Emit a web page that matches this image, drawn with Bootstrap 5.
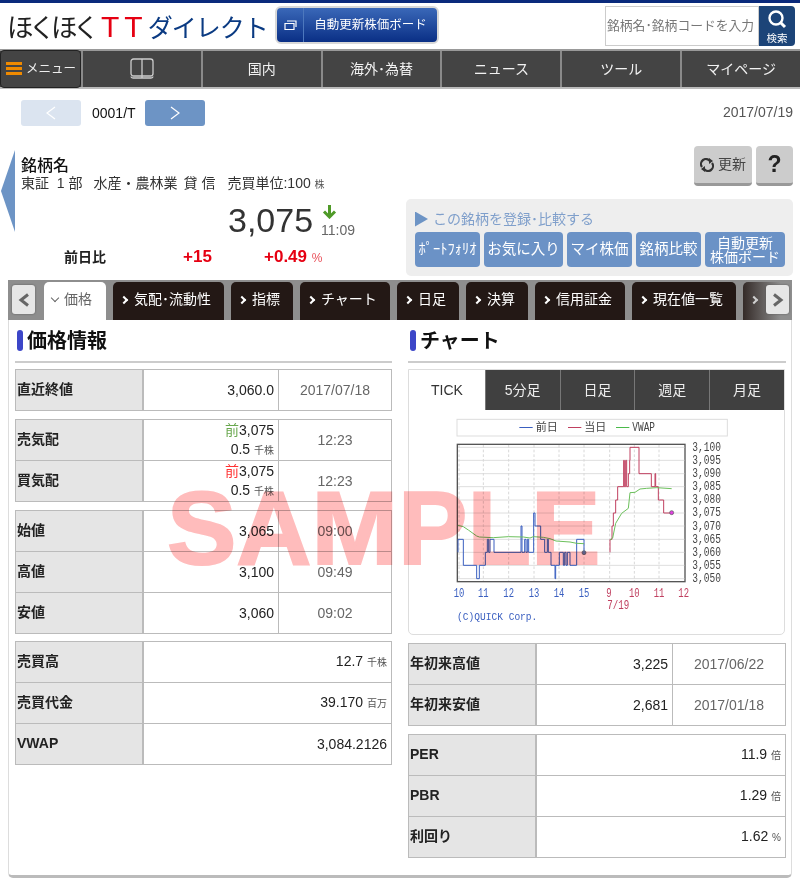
<!DOCTYPE html>
<html lang="ja">
<head>
<meta charset="utf-8">
<title>銘柄名</title>
<link href="https://cdn.jsdelivr.net/npm/bootstrap@5.3.0/dist/css/bootstrap.min.css" rel="stylesheet">
<style>
body{font-family:"Liberation Sans","Noto Sans CJK JP",sans-serif;font-size:14px;color:#222;background:#fff;width:800px;height:883px;overflow:hidden;position:relative;line-height:1.2}
.hk-head{border-top:3px solid #0a2a7c;height:49px;padding-top:3px}
.hk-logo{font-family:"Noto Sans CJK JP",sans-serif;line-height:40px;margin-left:7px;width:266px;white-space:nowrap}
.hk-logo .l1{color:#222;letter-spacing:-4.500px;font-size:26.500px}
.hk-logo .l2{color:#e60012;font-family:"Liberation Sans",sans-serif;font-size:30px;margin:0 0 0 6px;letter-spacing:5px}
.hk-logo .l3{color:#0a3a82;font-size:25px;letter-spacing:-1px}
.hk-auto{width:164px;height:38px;margin-left:2px;border:2px solid #d8d8d8;border-radius:6px;background:linear-gradient(#3a68b8,#0a2f85);color:#fff;font-size:12.500px;overflow:hidden}
.hk-auto .ic{width:27px;border-right:1px solid #4d78bd;height:100%}
.hk-search{margin-left:166px;height:40px;width:190px}
.hk-search .in{width:154px;border:1px solid #ccc;font-size:12.800px;color:#777;line-height:38px;padding-left:1px;white-space:nowrap;overflow:hidden}
.hk-search .bt{width:36px;background:#1c4478;color:#fff;font-size:10.500px;border-radius:0 4px 4px 0;line-height:1;text-align:center;padding-top:3px}
.hk-nav{height:40px;background:#444;border-top:2px solid #999;border-bottom:2px solid #bbb;color:#f2f2f2;font-size:14px}
.hk-nav .it{flex:1 1 0;border-left:2px solid #8a8a8a;height:100%}
.hk-menu{width:81px;height:38px;flex:none;background:#444;border:1px solid #222;border-radius:4px;font-size:12.500px;color:#eee;gap:4px;padding-left:5px}
.hk-bars{width:16px;height:14px;background:repeating-linear-gradient(#f08a00 0 3px,transparent 3px 5px)}
.hk-pager{height:50px;padding:11px 7px 0 21px}
.hk-pg{width:60px;height:26px;border-radius:3px;background:#6d94c5}
.hk-pg.off{background:#dbe4f0}
.hk-code{width:64px;padding-left:11px;font-size:14px;color:#111;line-height:27px}
.hk-date{color:#555;font-size:14px;line-height:24px}
.hk-info{height:141px}
.hk-left{width:400px;padding-top:11px}
.hk-tri{width:14px;height:82px;background:#6d94c5;clip-path:polygon(100% 0,100% 100%,0 50%);margin-left:1px}
.hk-name{font-size:16px;font-weight:500;margin-left:6px;line-height:19px;margin-top:6px;color:#111}
.hk-sub{font-size:14px;color:#333;margin-left:6px;line-height:17px;white-space:nowrap}
.hk-sub .u,.hk-u{font-size:10px;color:#555}
.hk-s1{margin-right:11px}.hk-s2{margin-right:6px}.hk-s3{margin-right:4px}.hk-s4{margin-right:12px}
.hk-price{font-size:34px;line-height:38px;color:#333;position:absolute;left:228px;top:201px}
.hk-time{color:#666;font-size:14px;line-height:16px}
.hk-chg{font-weight:700;height:24px;line-height:24px}
.hk-chg span{display:block}
.hk-c1{width:64px}
.hk-c2{width:119px;font-size:14px}
.hk-c3{width:81px;color:#e60012;font-size:17px}
.hk-c4{color:#e60012;font-size:17px}
.hk-c4 small{font-size:12px;font-weight:400;color:#e9505a}
.hk-right{width:400px;padding:7px 7px 0 6px}
.hk-gbtn{background:#ccc;border-radius:4px;border-bottom:3px solid #999;height:40px;color:#444;font-size:14px}
.hk-bu{width:58px}.hk-bq{width:37px;font-size:23px;font-weight:700;color:#222}
.hk-reg{background:#eee;border-radius:5px;height:77px;margin-top:13px;padding:12px 8px 0 9px}
.hk-regt{color:#7f9fcb;font-size:14px;line-height:16px;gap:5px}
.hk-regtri{width:13px;height:15px;background:#6d94c5;clip-path:polygon(0 0,100% 50%,0 100%)}
.hk-regb{margin-top:5px;gap:4px}
.hk-regb div{background:#6b92c6;color:#fff;height:35px;border-radius:4px;font-size:14.500px;display:flex;align-items:center;justify-content:center;text-align:center;white-space:nowrap}
.w1{width:65px}.w2{width:79px}.w3{width:65px}.w4{width:65px}.w5{width:80px;font-size:14px !important;line-height:14px}
.hk-tabs{margin-left:8px;width:784px;height:40px;background:#8e8e8e;position:relative;overflow:hidden;padding:2px 0 0 36px;gap:7px;color:#fff}
.hk-tab{height:38px;background:#231815;border-radius:5px 5px 0 0;font-size:14px;line-height:35px;padding-left:8px;white-space:nowrap;flex:none;overflow:hidden}
.hk-tab.on{background:#fff;color:#666}
.hk-tab i{display:inline-block;width:6px;height:6px;border-top:2px solid #fff;border-right:2px solid #fff;transform:rotate(45deg);margin-right:7px;position:relative;top:-1px}
.hk-tab.on i{border-color:#666;border-width:1.500px;transform:rotate(135deg);margin-right:6px;top:-3px}
.hk-arrow{position:absolute;top:5px;width:23px;height:29px;background:#e6e6e6;border-radius:3px;box-shadow:0 0 2px #555;display:flex;align-items:center;justify-content:center}
.hk-fade{position:absolute;right:0;top:0;width:56px;height:40px;background:linear-gradient(90deg,rgba(142,142,142,0),#8e8e8e 80%)}
.hk-panel{margin-left:8px;width:784px;height:558px;background:#fff;border-left:1px solid #ddd;border-right:1px solid #ddd;border-bottom:3px solid #bbb;border-radius:0 0 5px 5px;padding:0 5px 0 6px}
.hk-colL{width:377px}.hk-colR{width:378px}
.hk-h{height:43px;border-bottom:2px solid #ccc;padding-top:10px;margin-bottom:6px;font-size:20px;line-height:20px;font-weight:700;color:#111;font-family:"Noto Sans CJK JP",sans-serif;gap:4px;padding-left:2px}
.hk-hbar{width:6px;height:21px;background:#3c46c8;border-radius:3px}
.hk-t{table-layout:fixed;width:100%;margin-bottom:8px;border-collapse:collapse}
.hk-t.hk-t4{margin-top:-1px}
.hk-t td{height:41px;border:1px solid #bbb;padding:0 4px;font-size:14px;vertical-align:middle;background:#fff;color:#222}
.hk-t td.lb{width:127px;background:#e5e5e5;font-weight:700;padding:0 0 2px 1px;font-size:14px;color:#222;border-right-width:2px}
.hk-t td.v{text-align:right;line-height:19px}
.hk-t td.tm{width:113px;text-align:center;color:#666}
.hk-t .gr{color:#6aa84f}.hk-t .rd{color:#f33}
.hk-chart{height:266px;border:1px solid #ddd;border-radius:0 0 5px 5px;margin-bottom:8px;margin-right:1px}
.hk-ct{height:40px;background:#404040;color:#eee;font-size:14px}
.hk-ct div{width:75px;height:100%;border-left:1px solid #777;display:flex;align-items:center;justify-content:center}
.hk-ct div.on{width:76px;background:#fff;color:#333;border:0}
.hk-svg{display:block;margin:0 0 0 31px}
.hk-wm{position:absolute;left:167px;top:473px;font-family:"Liberation Sans",sans-serif;font-weight:700;font-size:104px;line-height:110px;color:#ffbcbc;-webkit-text-stroke:2px #ffbcbc;mix-blend-mode:multiply;pointer-events:none;white-space:nowrap}
</style>
</head>
<body>
<header class="hk-head d-flex align-items-start">
  <div class="hk-logo"><span class="l1">ほくほく</span><span class="l2">TT</span><span class="l3">ダイレクト</span></div>
  <div class="hk-auto d-flex align-items-center">
    <div class="ic d-flex align-items-center justify-content-center"><svg width="13" height="11" viewBox="0 0 13 11"><path d="M3 1h9v6M1 3.500h9v6H1z" fill="none" stroke="#fff" stroke-width="1.200"/></svg></div>
    <div class="flex-grow-1 text-center">自動更新株価ボード</div>
  </div>
  <div class="hk-search d-flex">
    <div class="in">銘柄名･銘柄コードを入力</div>
    <div class="bt"><svg width="20" height="20" viewBox="0 0 20 20" class="d-block mx-auto"><circle cx="9" cy="9" r="6.500" fill="none" stroke="#fff" stroke-width="2.400"/><path d="M13.500 13.500L18 18" stroke="#fff" stroke-width="3"/></svg><div class="mt-1">検索</div></div>
  </div>
</header>
<nav class="hk-nav d-flex align-items-center">
  <div class="hk-menu d-flex align-items-center"><span class="hk-bars"></span><span>メニュー</span></div>
  <div class="it d-flex align-items-center justify-content-center"><svg width="24" height="22" viewBox="0 0 24 22"><rect x="1" y="1" width="22" height="17" rx="2.500" fill="none" stroke="#ccc" stroke-width="1.300"/><path d="M12 1V20M1 18.500Q1 20 3 20H21Q23 20 23 18.500" fill="none" stroke="#ccc" stroke-width="1.300"/></svg></div>
  <div class="it d-flex align-items-center justify-content-center">国内</div>
  <div class="it d-flex align-items-center justify-content-center">海外･為替</div>
  <div class="it d-flex align-items-center justify-content-center">ニュース</div>
  <div class="it d-flex align-items-center justify-content-center">ツール</div>
  <div class="it d-flex align-items-center justify-content-center">マイページ</div>
</nav>
<section class="hk-pager d-flex align-items-start">
  <div class="hk-pg off d-flex align-items-center justify-content-center"><svg width="12" height="14" viewBox="0 0 12 14"><path d="M10 1L2 7l8 6" fill="none" stroke="#fff" stroke-width="1.200"/></svg></div>
  <div class="hk-code">0001/T</div>
  <div class="hk-pg d-flex align-items-center justify-content-center"><svg width="12" height="14" viewBox="0 0 12 14"><path d="M2 1l8 6-8 6" fill="none" stroke="#fff" stroke-width="1.200"/></svg></div>
  <div class="hk-date ms-auto">2017/07/19</div>
</section>
<section class="hk-info d-flex">
  <div class="hk-left d-flex flex-wrap align-content-start">
    <div class="hk-tri"></div>
    <div>
      <div class="hk-name">銘柄名</div>
      <div class="hk-sub"><span class="hk-s1">東証&nbsp;&nbsp;1&nbsp;部</span><span class="hk-s2">水産・農林業</span><span class="hk-s3">貸</span><span class="hk-s4">信</span>売買単位:100 <span class="u">株</span></div>
    </div>
  </div>
  <div class="hk-right">
    <div class="d-flex justify-content-end hk-gap">
      <div class="hk-gbtn hk-bu d-flex align-items-center justify-content-center gap-1 me-1"><svg width="14" height="14" viewBox="0 0 14 14"><path d="M2 9A5 5 0 0 1 10 3M12 5A5 5 0 0 1 4 11" fill="none" stroke="#333" stroke-width="2.200"/><path d="M9 0l4 3-4 3zM5 8l-4 3 4 3z" fill="#333"/></svg><span>更新</span></div>
      <div class="hk-gbtn hk-bq d-flex align-items-center justify-content-center">?</div>
    </div>
    <div class="hk-reg">
      <div class="hk-regt d-flex align-items-center"><span class="hk-regtri"></span><span>この銘柄を登録･比較する</span></div>
      <div class="hk-regb d-flex">
        <div class="w1">ﾎﾟｰﾄﾌｫﾘｵ</div><div class="w2">お気に入り</div><div class="w3">マイ株価</div><div class="w4">銘柄比較</div><div class="w5">自動更新<br>株価ボード</div>
      </div>
    </div>
  </div>
</section>
<div class="hk-price">3,075</div>
<svg class="position-absolute" style="left:322px;top:204px" width="15" height="15" viewBox="0 0 15 15"><path d="M7.500 1V12M2 7.500L7.500 13 13 7.500" fill="none" stroke="#4f9a28" stroke-width="3"/></svg>
<div class="hk-time position-absolute" style="left:321px;top:222px">11:09</div>
<div class="hk-chg d-flex position-absolute" style="left:0;top:245px">
  <span class="hk-c1"></span><span class="hk-c2">前日比</span><span class="hk-c3">+15</span><span class="hk-c4">+0.49 <small>%</small></span>
</div>
<div class="hk-tabs d-flex">
  <div class="hk-tab on" style="width:62px"><i></i>価格</div>
  <div class="hk-tab" style="width:111px"><i></i>気配･流動性</div>
  <div class="hk-tab" style="width:62px"><i></i>指標</div>
  <div class="hk-tab" style="width:90px"><i></i>チャート</div>
  <div class="hk-tab" style="width:62px"><i></i>日足</div>
  <div class="hk-tab" style="width:62px"><i></i>決算</div>
  <div class="hk-tab" style="width:90px"><i></i>信用証金</div>
  <div class="hk-tab" style="width:104px"><i></i>現在値一覧</div>
  <div class="hk-tab" style="width:62px"><i></i></div>
  <div class="hk-fade"></div>
  <div class="hk-arrow" style="left:4px"><svg width="12" height="14" viewBox="0 0 12 14"><path d="M10 1.500L3 7l7 5.500" fill="none" stroke="#666" stroke-width="3"/></svg></div>
  <div class="hk-arrow" style="right:3px"><svg width="12" height="14" viewBox="0 0 12 14"><path d="M2 1.500L9 7l-7 5.500" fill="none" stroke="#666" stroke-width="3"/></svg></div>
</div>
<main class="hk-panel d-flex justify-content-between">
  <div class="hk-colL">
    <div class="hk-h d-flex"><span class="hk-hbar"></span><span>価格情報</span></div>
    <table class="hk-t"><tr><td class="lb">直近終値</td><td class="v">3,060.0</td><td class="tm">2017/07/18</td></tr></table>
    <table class="hk-t">
      <tr><td class="lb">売気配</td><td class="v"><span class="gr">前</span>3,075<br>0.5 <span class="hk-u">千株</span></td><td class="tm">12:23</td></tr>
      <tr><td class="lb">買気配</td><td class="v"><span class="rd">前</span>3,075<br>0.5 <span class="hk-u">千株</span></td><td class="tm">12:23</td></tr>
    </table>
    <table class="hk-t">
      <tr><td class="lb">始値</td><td class="v">3,065</td><td class="tm">09:00</td></tr>
      <tr><td class="lb">高値</td><td class="v">3,100</td><td class="tm">09:49</td></tr>
      <tr><td class="lb">安値</td><td class="v">3,060</td><td class="tm">09:02</td></tr>
    </table>
    <table class="hk-t hk-t4">
      <tr><td class="lb">売買高</td><td class="v">12.7 <span class="hk-u">千株</span></td></tr>
      <tr><td class="lb">売買代金</td><td class="v">39.170 <span class="hk-u">百万</span></td></tr>
      <tr><td class="lb">VWAP</td><td class="v">3,084.2126</td></tr>
    </table>
  </div>
  <div class="hk-colR">
    <div class="hk-h d-flex"><span class="hk-hbar"></span><span>チャート</span></div>
    <div class="hk-chart">
      <div class="hk-ct d-flex"><div class="on">TICK</div><div>5分足</div><div>日足</div><div>週足</div><div>月足</div></div>
      <svg class="hk-svg" width="300" height="220" viewBox="0 0 900 660">
        <rect x="51" y="28" width="811" height="50" fill="#fff" stroke="#ddd" stroke-width="3"/>
        <g font-family="Noto Sans CJK JP,sans-serif" font-size="33" fill="#444">
          <rect x="238" y="51" width="40" height="3" fill="#3a5fc0"/><text x="287" y="64">前日</text>
          <rect x="384" y="51" width="40" height="3" fill="#c04060"/><text x="433" y="64">当日</text>
          <rect x="528" y="51" width="40" height="3" fill="#4aba4a"/><text x="577" y="64" font-family="Liberation Mono,monospace" font-size="36" textLength="68" lengthAdjust="spacingAndGlyphs">VWAP</text>
        </g>
        <rect x="52" y="103" width="683" height="412" fill="none" stroke="#555" stroke-width="4"/>
        <g stroke="#dedede" stroke-width="3">
          <path d="M54 112H733M54 151H733M54 191H733M54 230H733M54 270H733M54 309H733M54 348H733M54 388H733M54 427H733M54 466H733M54 506H733"/>
        </g>
        <g stroke="#d8d8d8" stroke-width="3" stroke-dasharray="8 6">
          <path d="M57 105V513M130 105V513M206 105V513M282 105V513M357 105V513M432 105V513M509 105V513M583 105V513M657 105V513"/>
        </g>
        <path d="M54 427V388H70V466H110V506H118V466H136V427H142V388H146V427H150V388H162V427H243V348H246V427H254V388H258V427H262V388H266V427H281V309H285V348H302V388H314V427H322V388H325V427H333V466H345V506H347V466H358V427H370V466H374V427H378V466H382V427H390V466H410V388H432V427" fill="none" stroke="#3a5fc0" stroke-width="3"/>
        <path d="M510 427V388H516V348H520V309H527V270H533V230H551V151H553V230H557V151H560V230H565V191H569V151H570V112H597V191H634V230H645V191H647V230H655V270H671V309H695" fill="none" stroke="#c04060" stroke-width="3"/>
        <path d="M54 346L70 350L85 360L110 378L118 381L160 383L205 380L250 381L270 384L280 380L310 382L330 386L348 393L390 396L410 400L432 401" fill="none" stroke="#6cc05c" stroke-width="3"/>
        <path d="M510 390L518 384L527 340L545 310L565 295L570 248L585 247L600 237L620 235L650 233L695 236" fill="none" stroke="#6cc05c" stroke-width="3"/>
        <circle cx="432" cy="428" r="6" fill="#5f7fb8" stroke="#555" stroke-width="2"/>
        <circle cx="695" cy="308" r="6" fill="#e040e0" stroke="#555" stroke-width="2"/>
        <g font-family="Liberation Mono,monospace" font-size="37" fill="#444">
          <text x="757" y="122" textLength="86" lengthAdjust="spacingAndGlyphs">3,100</text><text x="757" y="163" textLength="86" lengthAdjust="spacingAndGlyphs">3,095</text><text x="757" y="201" textLength="86" lengthAdjust="spacingAndGlyphs">3,090</text><text x="757" y="241" textLength="86" lengthAdjust="spacingAndGlyphs">3,085</text><text x="757" y="280" textLength="86" lengthAdjust="spacingAndGlyphs">3,080</text><text x="757" y="319" textLength="86" lengthAdjust="spacingAndGlyphs">3,075</text><text x="757" y="359" textLength="86" lengthAdjust="spacingAndGlyphs">3,070</text><text x="757" y="398" textLength="86" lengthAdjust="spacingAndGlyphs">3,065</text><text x="757" y="437" textLength="86" lengthAdjust="spacingAndGlyphs">3,060</text><text x="757" y="476" textLength="86" lengthAdjust="spacingAndGlyphs">3,055</text><text x="757" y="516" textLength="86" lengthAdjust="spacingAndGlyphs">3,050</text>
        </g>
        <g font-family="Liberation Mono,monospace" font-size="37" fill="#3a5fc0">
          <text x="41" y="560" textLength="32" lengthAdjust="spacingAndGlyphs">10</text><text x="114" y="560" textLength="32" lengthAdjust="spacingAndGlyphs">11</text><text x="190" y="560" textLength="32" lengthAdjust="spacingAndGlyphs">12</text><text x="266" y="560" textLength="32" lengthAdjust="spacingAndGlyphs">13</text><text x="341" y="560" textLength="32" lengthAdjust="spacingAndGlyphs">14</text><text x="416" y="560" textLength="32" lengthAdjust="spacingAndGlyphs">15</text>
        </g>
        <g font-family="Liberation Mono,monospace" font-size="37" fill="#c04060">
          <text x="499" y="560" textLength="16" lengthAdjust="spacingAndGlyphs">9</text><text x="567" y="560" textLength="32" lengthAdjust="spacingAndGlyphs">10</text><text x="641" y="560" textLength="32" lengthAdjust="spacingAndGlyphs">11</text><text x="715" y="560" textLength="32" lengthAdjust="spacingAndGlyphs">12</text><text x="502" y="596" textLength="66" lengthAdjust="spacingAndGlyphs">7/19</text>
        </g>
        <text x="51" y="631" font-family="Liberation Mono,monospace" font-size="34" fill="#3a5fc0" textLength="241" lengthAdjust="spacingAndGlyphs">(C)QUICK Corp.</text>
      </svg>
    </div>
    <table class="hk-t">
      <tr><td class="lb">年初来高値</td><td class="v">3,225</td><td class="tm">2017/06/22</td></tr>
      <tr><td class="lb">年初来安値</td><td class="v">2,681</td><td class="tm">2017/01/18</td></tr>
    </table>
    <table class="hk-t">
      <tr><td class="lb">PER</td><td class="v">11.9 <span class="hk-u">倍</span></td></tr>
      <tr><td class="lb">PBR</td><td class="v">1.29 <span class="hk-u">倍</span></td></tr>
      <tr><td class="lb">利回り</td><td class="v">1.62 <span class="hk-u">%</span></td></tr>
    </table>
  </div>
</main>
<div class="hk-wm">SAMPLE</div>
<script src="https://cdn.jsdelivr.net/npm/bootstrap@5.3.0/dist/js/bootstrap.bundle.min.js"></script>
</body>
</html>
